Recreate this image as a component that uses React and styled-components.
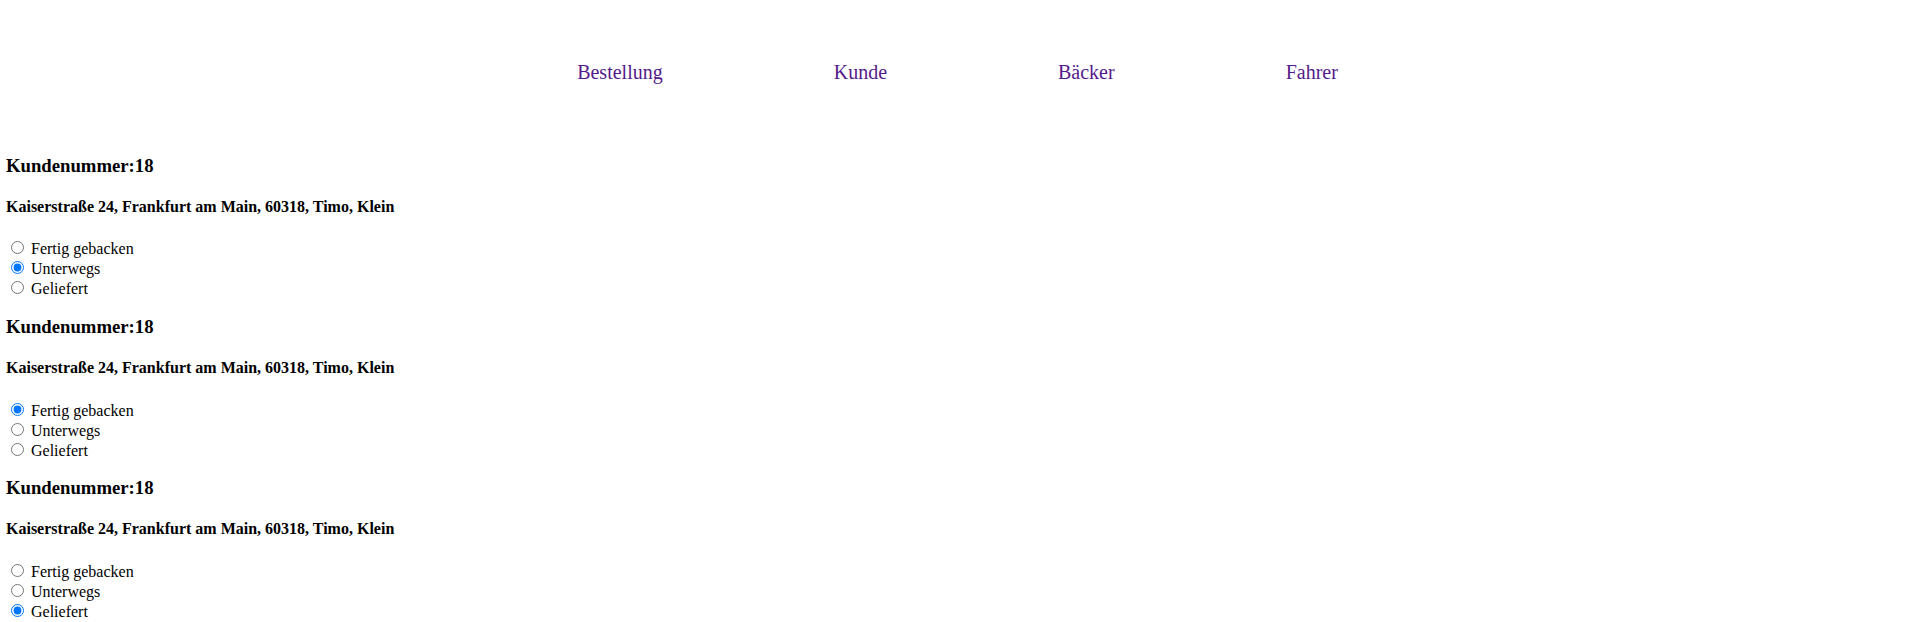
import React from "react";
import styled, { createGlobalStyle } from "styled-components";

const GlobalStyle = createGlobalStyle`
  html, body {
    margin: 0;
    padding: 0;
    background: #ffffff;
  }
  body {
    font-family: "Liberation Serif", "Times New Roman", serif;
    font-size: 16px;
    color: #000000;
  }
`;

const Nav = styled.nav`
  display: flex;
  justify-content: center;
  gap: 171px;
  padding: 61px 0 52px 2px;
`;

const NavLink = styled.a`
  font-family: "Liberation Serif", "Times New Roman", serif;
  font-size: 20px;
  color: #551a8b;
  text-decoration: none;
  cursor: pointer;
`;

const Main = styled.main`
  padding: 0 6px;
`;

const OrderBlock = styled.section``;

const CustomerNumber = styled.h3`
  font-size: 1.17em;
  font-weight: bold;
  margin: 18.72px 0;
`;

const Address = styled.h4`
  font-size: 16px;
  font-weight: bold;
  margin: 21.28px 0;
`;

const StatusList = styled.div`
  padding-top: 1px;
  margin-bottom: -1px;
`;

const Option = styled.label`
  display: block;
  font-size: 16px;
`;

const Radio = styled.input.attrs({ type: "radio" })`
  width: 13px;
  height: 13px;
  margin: 3px 3px 0 5px;
`;

const statuses = ["Fertig gebacken", "Unterwegs", "Geliefert"];

const orders = [
  { id: 1, customer: 18, address: "Kaiserstraße 24, Frankfurt am Main, 60318, Timo, Klein", status: "Unterwegs" },
  { id: 2, customer: 18, address: "Kaiserstraße 24, Frankfurt am Main, 60318, Timo, Klein", status: "Fertig gebacken" },
  { id: 3, customer: 18, address: "Kaiserstraße 24, Frankfurt am Main, 60318, Timo, Klein", status: "Geliefert" },
];

export default function App() {
  return (
    <>
      <GlobalStyle />
      <Nav>
        <NavLink href="#bestellung">Bestellung</NavLink>
        <NavLink href="#kunde">Kunde</NavLink>
        <NavLink href="#baecker">Bäcker</NavLink>
        <NavLink href="#fahrer">Fahrer</NavLink>
      </Nav>
      <Main>
        {orders.map((o) => (
          <OrderBlock key={o.id}>
            <CustomerNumber>Kundenummer:{o.customer}</CustomerNumber>
            <Address>{o.address}</Address>
            <StatusList>
              {statuses.map((s) => (
                <Option key={s}>
                  <Radio name={`status-${o.id}`} defaultChecked={s === o.status} />{" "}
                  {s}
                </Option>
              ))}
            </StatusList>
          </OrderBlock>
        ))}
      </Main>
    </>
  );
}
